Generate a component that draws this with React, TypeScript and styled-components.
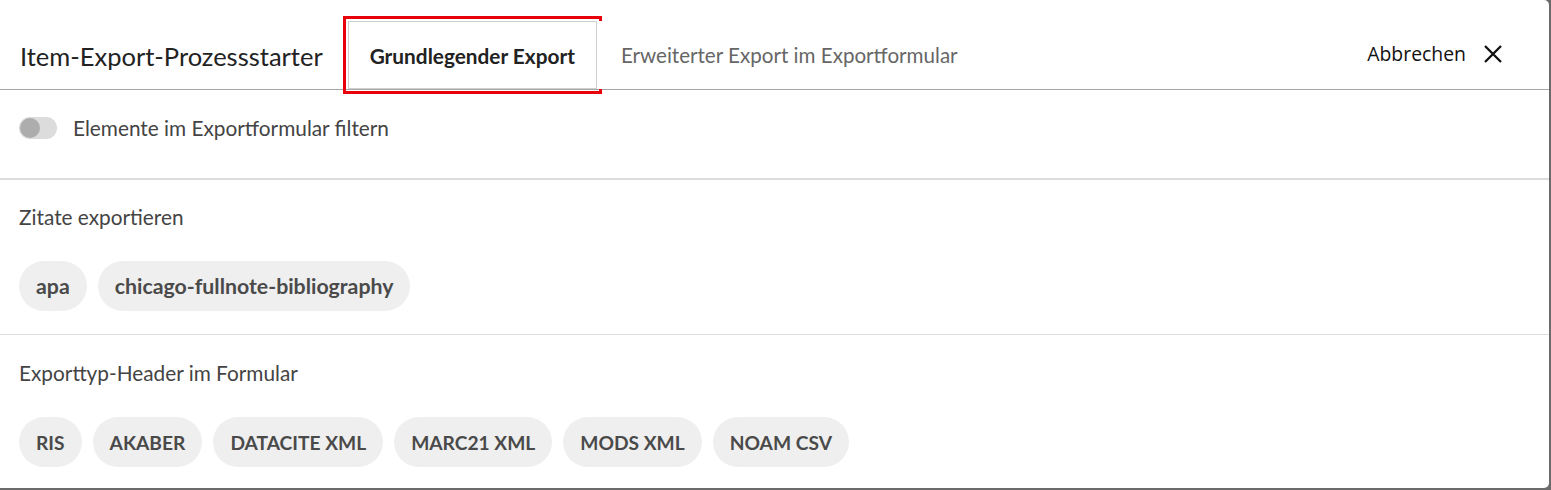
import React, { useState } from 'react';
import styled, { createGlobalStyle } from 'styled-components';

const GlobalStyle = createGlobalStyle`
  html, body {
    margin: 0;
    padding: 0;
    background: #6b6b6b;
  }
  body {
    font-family: Lato, 'Noto Sans', sans-serif;
  }
`;

const Dialog = styled.div`
  width: 1549px;
  height: 488px;
  background: #fff;
  border-radius: 0 5px 5px 0;
  overflow: hidden;
`;

const Header = styled.div`
  height: 89px;
  display: flex;
  align-items: flex-end;
  padding: 0 46px 0 20px;
  border-bottom: 1px solid #a6a6a6;
`;

const Title = styled.h1`
  margin: 0 25px 18px 0;
  font-size: 25.5px;
  font-weight: 400;
  line-height: 30px;
  color: #222;
`;

const Tab = styled.button<{ $active?: boolean }>`
  height: 68px;
  padding: 0 21px;
  margin-right: 2px;
  font-family: inherit;
  font-size: ${(p) => (p.$active ? '20.8px' : '20.6px')};
  font-weight: ${(p) => (p.$active ? 700 : 400)};
  color: ${(p) => (p.$active ? '#222' : '#666')};
  background: #fff;
  border: 1px solid ${(p) => (p.$active ? '#cfcfcf' : 'transparent')};
  border-radius: 0;
  outline: ${(p) => (p.$active ? '3px solid #e8000b' : 'none')};
  outline-offset: 2px;
  cursor: pointer;
`;

const Spacer = styled.div`
  flex: 1;
`;

const CancelButton = styled.button`
  margin-bottom: 22px;
  display: flex;
  align-items: center;
  gap: 17px;
  padding: 0;
  background: none;
  border: none;
  font-family: 'Open Sans', sans-serif;
  font-size: 19.4px;
  color: #111;
  cursor: pointer;
`;

const Section = styled.div<{ $border?: string }>`
  padding: 0 19px;
  border-bottom: ${(p) => p.$border || 'none'};
`;

const ToggleRow = styled.label`
  height: 88px;
  display: flex;
  align-items: center;
  gap: 16px;
  font-size: 20.8px;
  color: #444;
  padding-bottom: 13px;
  box-sizing: border-box;
  cursor: pointer;
`;

const Track = styled.span<{ $on: boolean }>`
  width: 38px;
  height: 22px;
  border-radius: 11px;
  background: ${(p) => (p.$on ? '#9bc4e8' : '#dcdcdc')};
  display: flex;
  align-items: center;
  justify-content: ${(p) => (p.$on ? 'flex-end' : 'flex-start')};
  padding: 0 1px;
  box-sizing: border-box;
`;

const Knob = styled.span<{ $on: boolean }>`
  width: 20px;
  height: 20px;
  border-radius: 50%;
  background: ${(p) => (p.$on ? '#2a6fb0' : '#adadad')};
`;

const Label = styled.div<{ $top: number }>`
  padding-top: ${(p) => p.$top}px;
  font-size: 20.8px;
  color: #444;
  line-height: 24px;
`;

const ChipRow = styled.div`
  display: flex;
  gap: 11px;
  padding: 32px 0 23px;
`;

const Chip = styled.button<{ $caps?: boolean }>`
  height: 50px;
  padding: 0 17px;
  border: none;
  border-radius: 25px;
  background: #efefef;
  font-family: inherit;
  font-size: ${(p) => (p.$caps ? '19.2px' : '21.3px')};
  font-weight: 700;
  color: #4a4a4a;
  cursor: pointer;
`;

const citations = ['apa', 'chicago-fullnote-bibliography'];
const exportTypes = ['RIS', 'AKABER', 'DATACITE XML', 'MARC21 XML', 'MODS XML', 'NOAM CSV'];

function CloseIcon() {
  return (
    <svg width='20' height='20' viewBox='0 0 20 20'>
      <path d='M2 2 L18 18 M18 2 L2 18' stroke='#111' strokeWidth='2.3' fill='none' />
    </svg>
  );
}

export default function App() {
  const [tab, setTab] = useState(0);
  const [filter, setFilter] = useState(false);

  return (
    <>
      <GlobalStyle />
      <Dialog>
        <Header>
          <Title>Item-Export-Prozessstarter</Title>
          <Tab $active={tab === 0} onClick={() => setTab(0)}>
            Grundlegender Export
          </Tab>
          <Tab $active={tab === 1} onClick={() => setTab(1)}>
            Erweiterter Export im Exportformular
          </Tab>
          <Spacer />
          <CancelButton>
            Abbrechen
            <CloseIcon />
          </CancelButton>
        </Header>
        <Section $border='2px solid #dcdcdc'>
          <ToggleRow onClick={() => setFilter(!filter)}>
            <Track $on={filter}>
              <Knob $on={filter} />
            </Track>
            Elemente im Exportformular filtern
          </ToggleRow>
        </Section>
        <Section $border='1px solid #dcdcdc'>
          <Label $top={25}>Zitate exportieren</Label>
          <ChipRow>
            {citations.map((c) => (
              <Chip key={c}>{c}</Chip>
            ))}
          </ChipRow>
        </Section>
        <Section>
          <Label $top={26}>Exporttyp-Header im Formular</Label>
          <ChipRow>
            {exportTypes.map((t) => (
              <Chip key={t} $caps>
                {t}
              </Chip>
            ))}
          </ChipRow>
        </Section>
      </Dialog>
    </>
  );
}
